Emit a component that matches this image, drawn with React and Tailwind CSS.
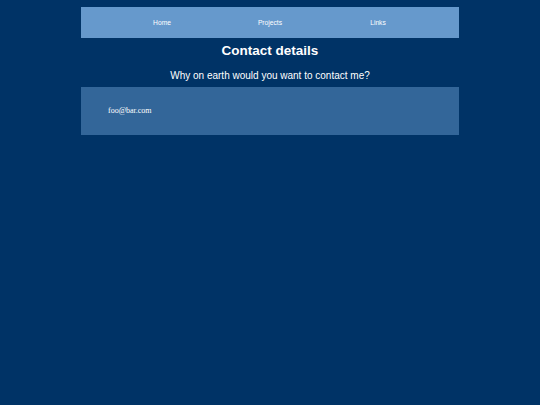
export default function App() {
  return (
    <div className="min-h-[405px] w-full bg-[#003366] font-['Liberation_Sans',Arial,sans-serif] text-white">
      <div className="mx-auto w-[378px] pt-[7px]">
        <nav className="flex h-[31px] items-center justify-center bg-[#6699cc] pt-px">
          {["Home", "Projects", "Links"].map((l) => (
            <a key={l} href="#" className="w-[108px] text-center text-[6.7px] text-white">
              {l}
            </a>
          ))}
        </nav>
        <h1 className="mt-[5px] text-center text-[13.5px] font-bold leading-[16px]">Contact details</h1>
        <p className="mt-[11px] text-center text-[10px] leading-[12px]">
          Why on earth would you want to contact me?
        </p>
        <div className="mt-[5px] flex h-[48px] items-center bg-[#336699] pl-[27px]">
          <span className="font-['Liberation_Serif','Times_New_Roman',serif] text-[8px]">foo@bar.com</span>
        </div>
      </div>
    </div>
  );
}
